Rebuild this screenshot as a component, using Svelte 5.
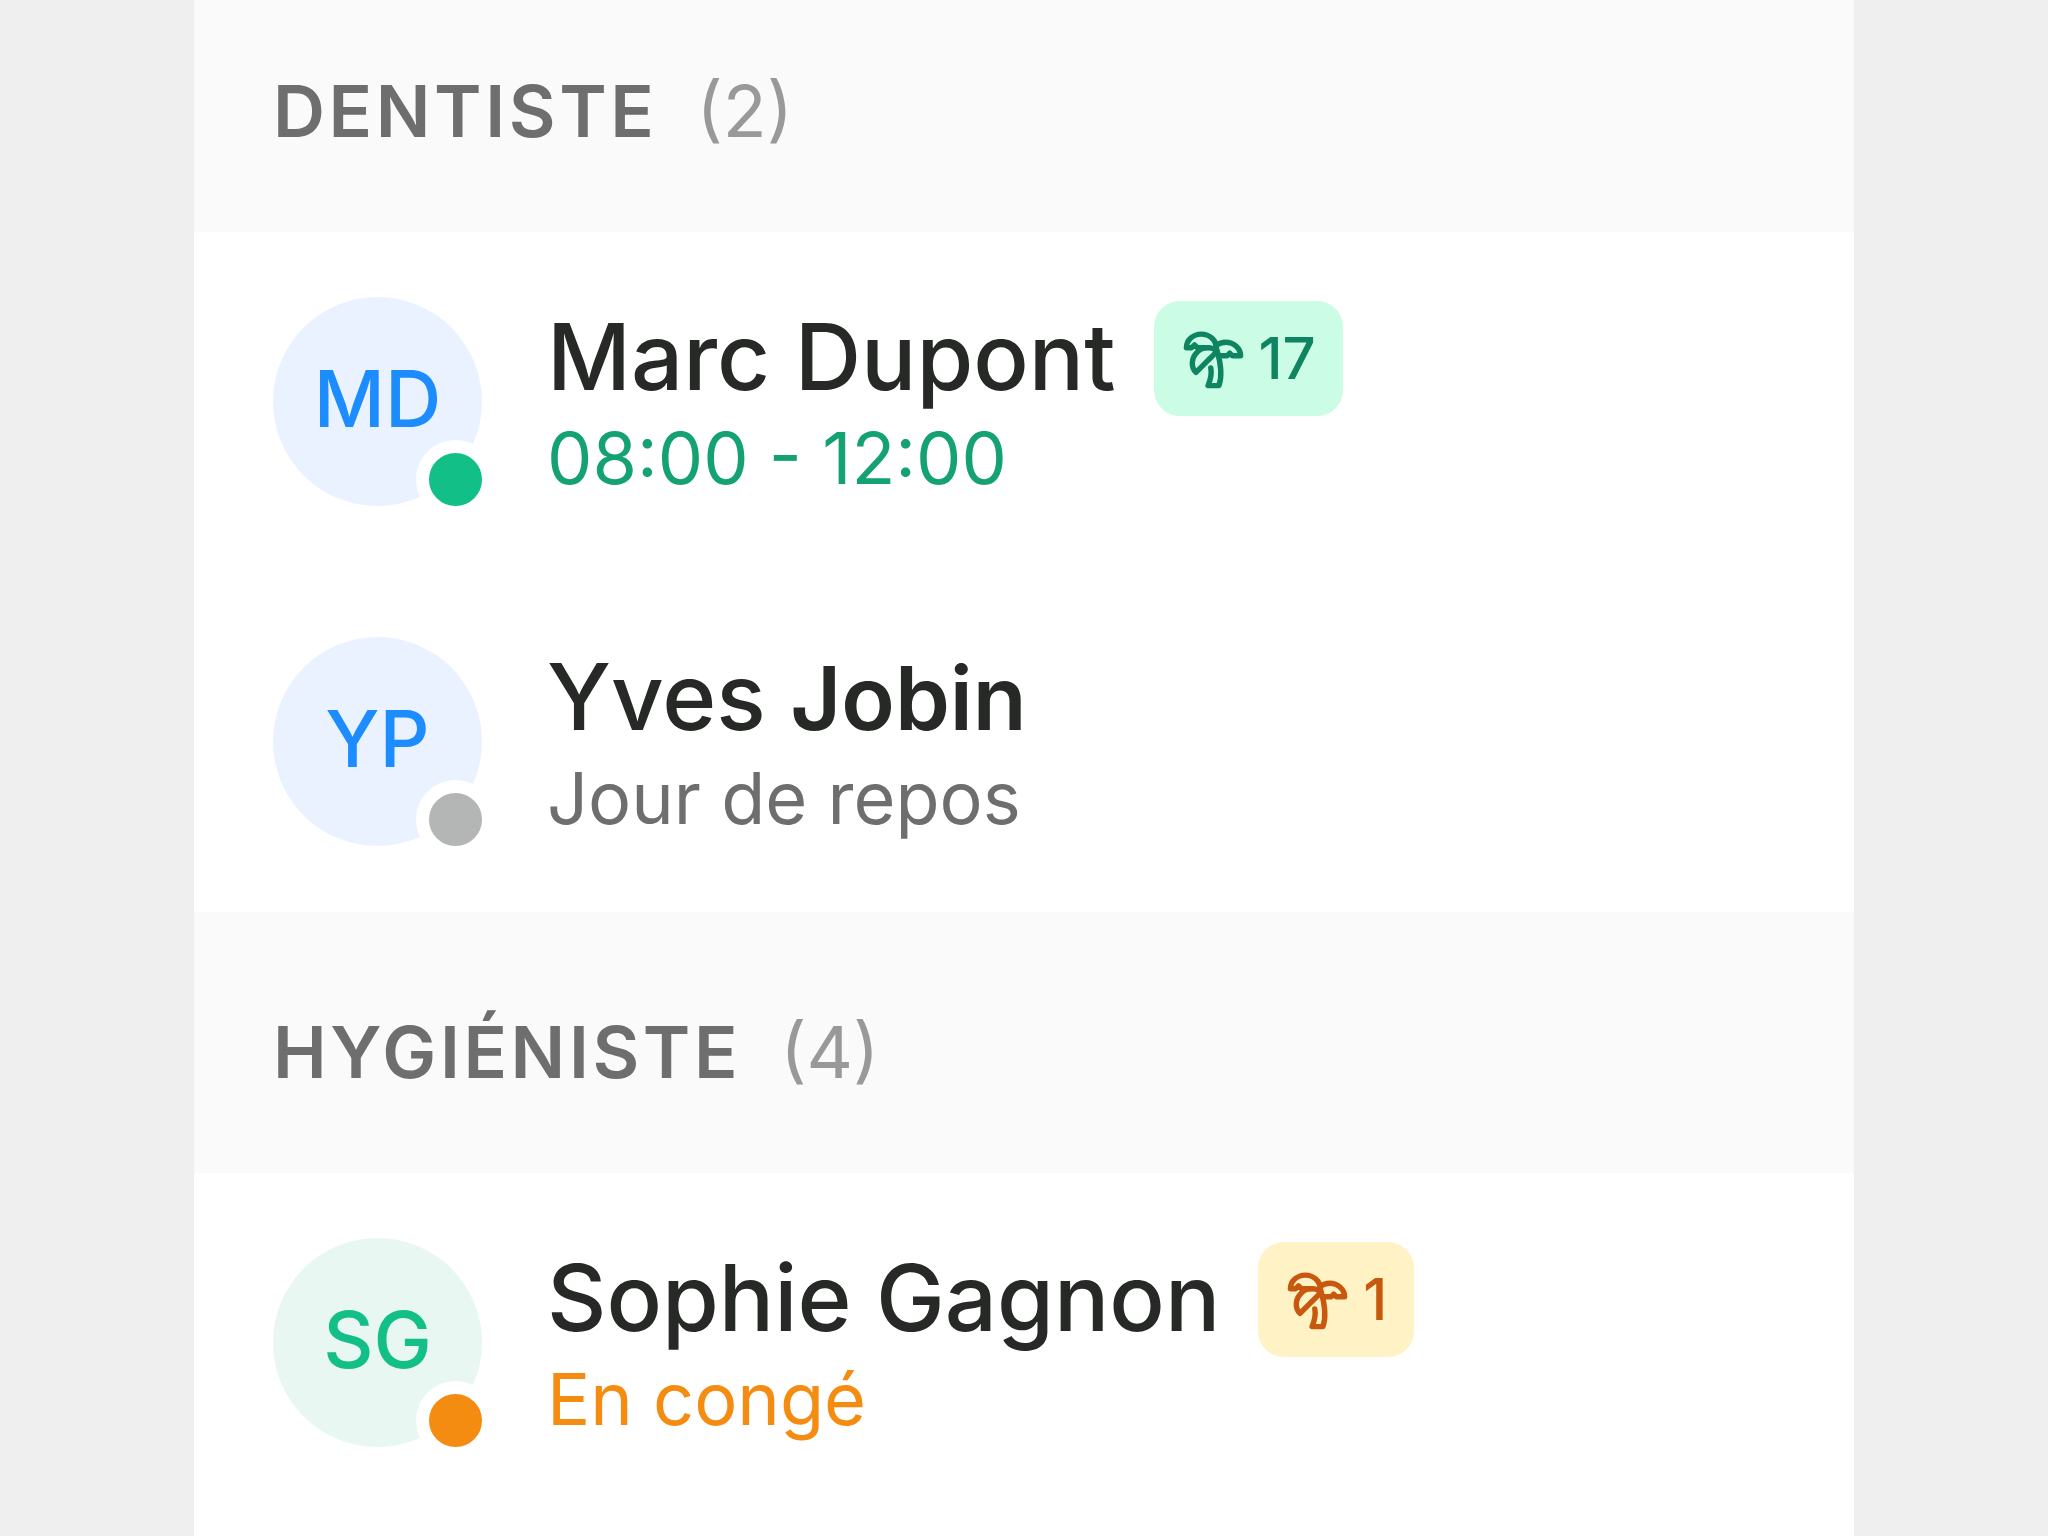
<script lang="ts">
  type Person = {
    name: string; surname: string; initials: string; tone: 'blue' | 'green';
    status: 'working' | 'off' | 'leave'; label: string;
    leave?: number; strong?: boolean;
  };
  type Group = { role: string; count: number; people: Person[] };

  const groups: Group[] = [
    {
      role: 'Dentiste', count: 2,
      people: [
        { name: 'Marc', surname: 'Dupont', initials: 'MD', tone: 'blue', status: 'working', label: '08:00 - 12:00', leave: 17 },
        { name: 'Yves', surname: 'Jobin', initials: 'YP', tone: 'blue', status: 'off', label: 'Jour de repos', strong: true },
      ],
    },
    {
      role: 'Hygiéniste', count: 4,
      people: [
        { name: 'Sophie', surname: 'Gagnon', initials: 'SG', tone: 'green', status: 'leave', label: 'En congé', leave: 1 },
      ],
    },
  ];
</script>

<main class="panel">
  {#each groups as g}
    <section>
      <header>
        <h2>{g.role}</h2>
        <span class="count">({g.count})</span>
      </header>
      <ul>
        {#each g.people as p}
          <li>
            <div class="avatar {p.tone}">
              {p.initials}
              <span class="dot {p.status}"></span>
            </div>
            <div class="info">
              <div class="top">
                <span class="name">{p.name} <span class:strong={p.strong}>{p.surname}</span></span>
                {#if p.leave}
                  <span class="badge" class:low={p.leave < 5}>
                    <svg viewBox="0 0 24 24" aria-hidden="true">
                      <path d="M13 8c0-2.76-2.46-5-5.5-5S2 5.24 2 8h2l1-1 1 1h4" />
                      <path d="M13 7.14A5.82 5.82 0 0 1 16.5 6c3.04 0 5.5 2.24 5.5 5h-3l-1-1-1 1h-3" />
                      <path d="M5.89 9.71c-2.15 2.15-2.3 5.47-.35 7.43l4.24-4.25.7-.7.71-.71 2.12-2.12c-1.95-1.96-5.27-1.8-7.42.35" />
                      <path d="M11 15.5c.5 2.5-.17 4.5-1 6.5h4c2-5.5-.5-12-1-14" />
                    </svg>
                    {p.leave}
                  </span>
                {/if}
              </div>
              <p class="label {p.status}">{p.label}</p>
            </div>
          </li>
        {/each}
      </ul>
    </section>
  {/each}
</main>

<style>
  :global(body) { background: #efefef; }

  .panel {
    box-sizing: border-box; min-height: 100vh;
    margin: 0 194px; background: #fff;
    font-family: Inter, "Liberation Sans", sans-serif; color: #272927;
  }

  header {
    display: flex; align-items: baseline; gap: 39px;
    padding: 91px 79px 72px; background: #fafafa;
    font-size: 72px; line-height: 98px;
  }
  section:first-child header { padding-top: 62px; }
  h2 {
    margin: 0; font-size: 72px; font-weight: 600;
    text-transform: uppercase; letter-spacing: 0.05em; color: #6e6e6e;
  }
  .count { color: #999; }

  ul { list-style: none; margin: 0; padding: 0; }
  li { display: flex; align-items: center; gap: 65px; padding: 65px 79px 66px; }

  .avatar {
    position: relative; flex: none; box-sizing: border-box;
    display: flex; align-items: center; justify-content: center;
    width: 209px; height: 209px; padding-bottom: 6px; border-radius: 50%;
    font-size: 78px; font-weight: 500;
  }
  .avatar.blue { background: #ebf2ff; color: #1c8cff; }
  .avatar.green { background: #e8f7f2; color: #12bf86; }

  .dot {
    position: absolute; right: -13px; bottom: -13px;
    width: 53px; height: 53px; border: 13px solid #fff; border-radius: 50%;
  }
  .dot.working { background: #12bf86; }
  .dot.off { background: #b4b6b5; }
  .dot.leave { background: #f58c12; }

  .info { padding-bottom: 3px; }
  .top { display: flex; align-items: flex-start; gap: 38px; min-height: 115px; }
  .name { font-size: 92px; line-height: 111px; font-weight: 500; white-space: nowrap; }
  .strong { font-size: 88px; font-weight: 600; }

  .badge {
    display: flex; align-items: center; gap: 13px;
    height: 115px; padding: 0 27px; border-radius: 26px;
    font-size: 58px; font-weight: 500;
    background: #cbfce5; color: #0e8560;
  }
  .badge.low { background: #fff3c6; color: #c9580f; }
  svg {
    width: 65px; height: 65px; fill: none; stroke: currentColor;
    stroke-width: 2; stroke-linecap: round; stroke-linejoin: round;
  }

  .label { margin: 0; font-size: 72px; line-height: 84px; }
  .label.working { color: #14a273; }
  .label.off { color: #6e6e6e; }
  .label.leave { color: #f58c12; }
</style>
